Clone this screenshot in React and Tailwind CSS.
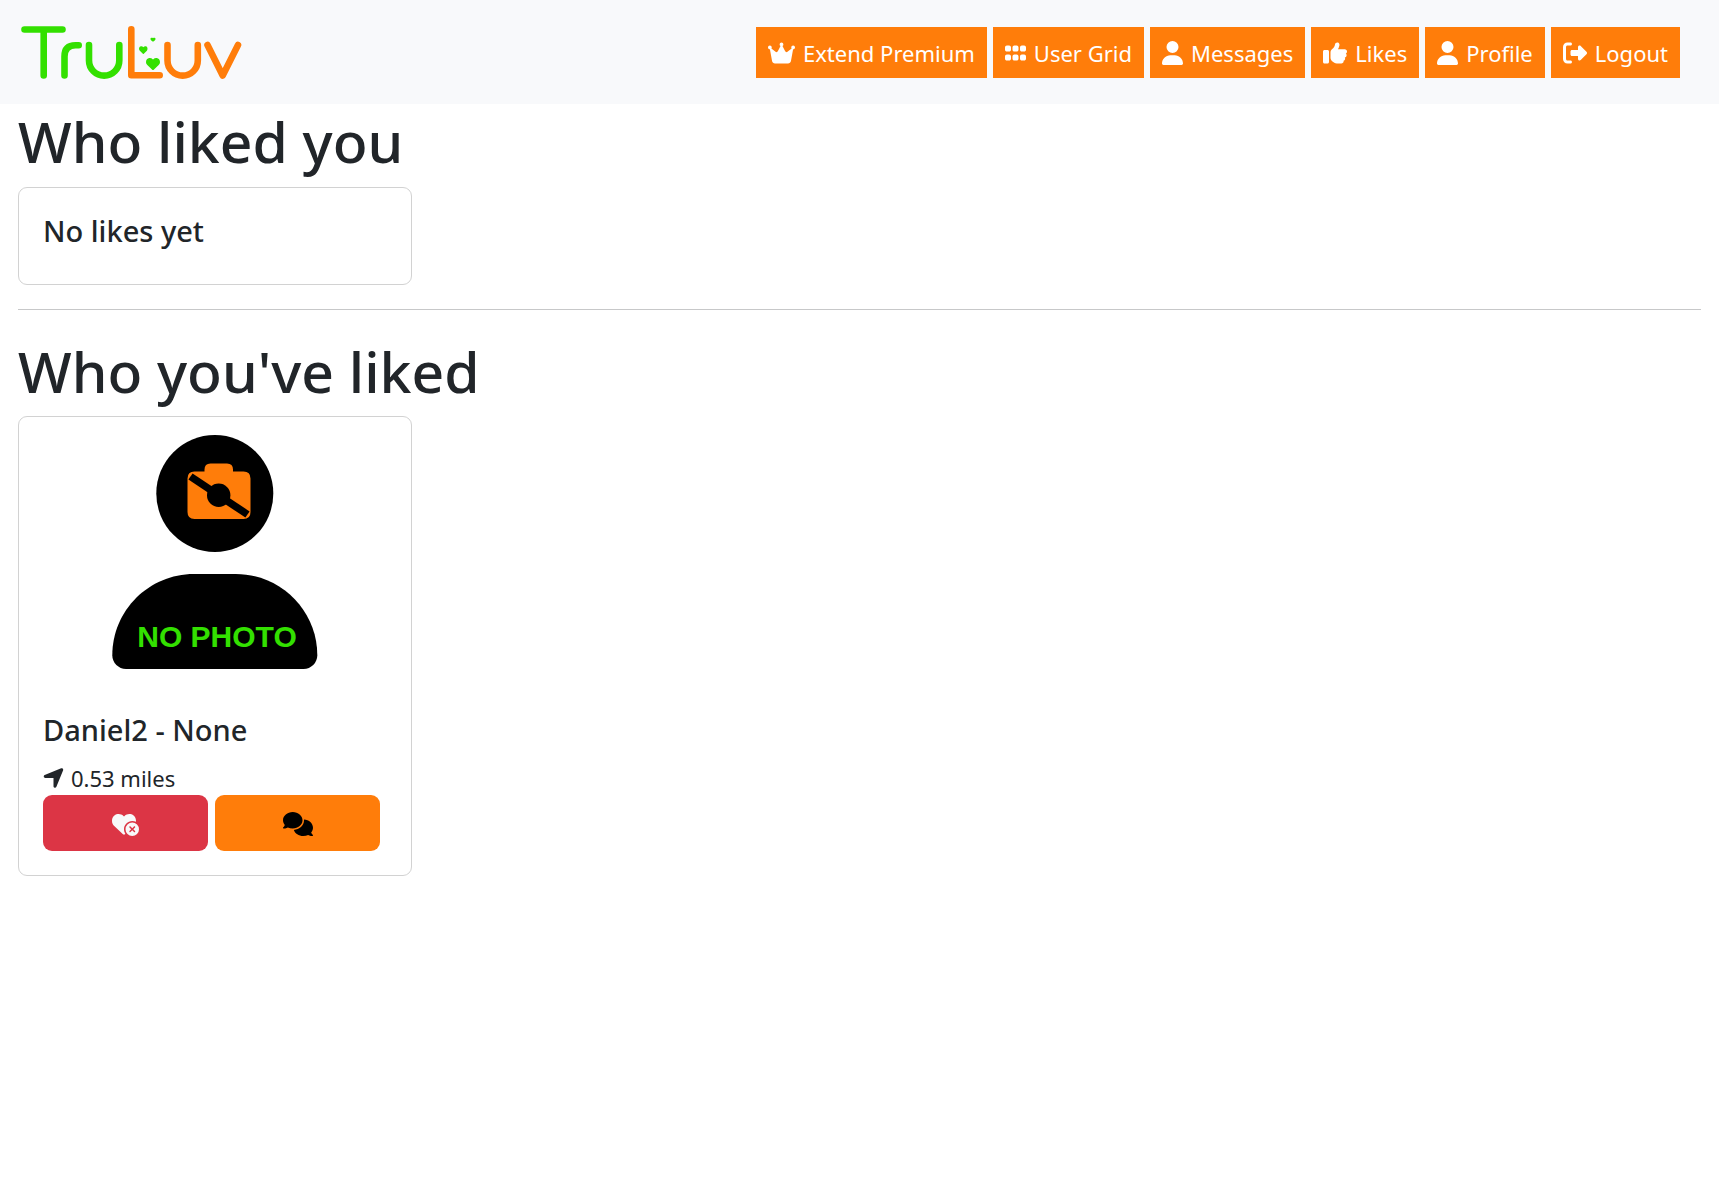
import {
  FaCrown,
  FaGrip,
  FaUser,
  FaThumbsUp,
  FaRightFromBracket,
  FaLocationArrow,
  FaHeartCircleXmark,
  FaComments,
} from "react-icons/fa6";

const links = [
  { label: "Extend Premium", Icon: FaCrown, size: "h-6 w-[27px]" },
  { label: "User Grid", Icon: FaGrip, size: "h-6 w-[21px]" },
  { label: "Messages", Icon: FaUser, size: "h-6 w-[21px]" },
  { label: "Likes", Icon: FaThumbsUp, size: "h-6 w-6" },
  { label: "Profile", Icon: FaUser, size: "h-6 w-[21px]" },
  { label: "Logout", Icon: FaRightFromBracket, size: "h-6 w-6" },
];

function Heart({ x, y, width, height }) {
  return (
    <svg x={x} y={y} width={width} height={height} viewBox="0 0 512 448" preserveAspectRatio="none">
      <path
        fill="#33e000"
        d="M47.6 268.4 228.3 437a40.5 40.5 0 0 0 55.4 0L464.4 268.4C494.800 240 512 200.300 512 158.900v-5.800C512 83.300 461.500 23.600 392.600 12.100 347 4.500 300.600 19.400 268 52l-12 12-12-12C211.400 19.400 165 4.500 119.400 12.100 50.500 23.600 0 83.300 0 153.100v5.800c0 41.400 17.200 81.100 47.600 109.500z"
      />
    </svg>
  );
}

function Logo() {
  return (
    <svg className="h-[60px] w-[224px]" viewBox="18 22 224 60" role="img" aria-label="TruLuv">
      <g fill="none" strokeWidth="6.600" strokeLinecap="round" strokeLinejoin="round">
        <g stroke="#33e000">
          <path d="M24.500 29.500H62.500M43.700 29.500V75.500" />
          <path d="M64.500 75.500V56.500Q64.500 45.300 75.500 45.300H78.700" />
          <path d="M89 45V60.500A15.150 15.150 0 0 0 119.300 60.500V45" />
        </g>
        <g stroke="#ff7d0a">
          <path d="M131.300 29.300V75.300H159.700" />
          <path d="M167.500 45V60.500A15.150 15.150 0 0 0 197.800 60.500V45" />
          <path d="M207.500 45L222.700 75.500L238 45" />
        </g>
      </g>
      <Heart x={146} y={57.7} width={14} height={12.3} />
      <Heart x={139} y={46} width={8.7} height={8} />
      <Heart x={150.3} y={37.5} width={5.4} height={4.3} />
    </svg>
  );
}

function NoPhoto() {
  return (
    <svg className="mx-auto my-[18px] block h-[234px] w-[206px]" viewBox="0 0 206 234" role="img" aria-label="No photo">
      <circle cx="102.800" cy="58.500" r="58.500" />
      <path d="M81.900 139H123.700C168.600 139 205.300 175.400 205.300 220.300C205.300 227.900 199.100 234 191.600 234H14C6.500 234 .3 227.900 .3 220.300C.3 175.400 37 139 81.900 139Z" />
      <path
        fill="#ff7d0a"
        d="M82.500 36.500H92.500V34.500Q92.500 28.500 98.500 28.500H115Q121 28.500 121 34.500V36.500H131.500Q138.500 36.500 138.500 43.500V77Q138.500 84 131.500 84H82.500Q75.500 84 75.500 77V43.500Q75.500 36.500 82.500 36.500Z"
      />
      <path d="M78.500 41.500L135.500 79.500" stroke="#000" strokeWidth="7.500" />
      <circle cx="106.700" cy="60.300" r="11.700" />
      <text x="105" y="212" textAnchor="middle" fill="#33e000" className="font-['Liberation_Sans',sans-serif] text-[30px] font-bold">
        NO PHOTO
      </text>
    </svg>
  );
}

export default function App() {
  return (
    <div className="bg-white font-['Noto_Sans','Open_Sans',sans-serif] text-[22px] leading-9 text-[#212529]">
      <header className="flex items-center justify-between bg-[#f8f9fb] py-[22px] pr-[39px] pl-[18px]">
        <a href="#home">
          <Logo />
        </a>
        <nav className="flex gap-1.5">
          {links.map(({ label, Icon, size }) => (
            <a key={label} href="#nav" className="flex h-[51px] items-center gap-2 bg-[#ff7d0a] px-3 pt-0.5 whitespace-nowrap text-white">
              <Icon className={size} aria-hidden="true" />
              {label}
            </a>
          ))}
        </nav>
      </header>
      <main className="px-[18px]">
        <h1 className="mb-[9px] text-[57px] leading-[74px] font-medium">Who liked you</h1>
        <section className="w-[394px] rounded-[9px] border border-[#d2d2d2] p-6">
          <h2 className="mb-2.5 text-[29px] leading-[38px] font-medium">No likes yet</h2>
        </section>
        <hr className="my-6 border-[#c7c8c9]" />
        <h1 className="mb-2 text-[57px] leading-[74px] font-medium">Who you've liked</h1>
        <section className="w-[394px] rounded-[9px] border border-[#d2d2d2]">
          <NoPhoto />
          <div className="p-6">
            <h2 className="mb-2.5 text-[29px] leading-[38px] font-medium">Daniel2 - None</h2>
            <p className="flex h-9 items-center gap-[7px] pt-0.5">
              <FaLocationArrow className="h-6 w-[21px]" aria-hidden="true" />
              0.53 miles
            </p>
            <div className="flex gap-[7px]">
              <button type="button" aria-label="Unlike" className="flex h-14 w-[165px] items-center justify-center rounded-[9px] bg-[#dc3545] pt-0.5 text-[#f8f9fa]">
                <FaHeartCircleXmark className="h-6 w-[27px]" />
              </button>
              <button type="button" aria-label="Chat" className="flex h-14 w-[165px] items-center justify-center rounded-[9px] bg-[#ff7d0a] pt-0.5 text-black">
                <FaComments className="h-6 w-[30px]" />
              </button>
            </div>
          </div>
        </section>
      </main>
    </div>
  );
}
